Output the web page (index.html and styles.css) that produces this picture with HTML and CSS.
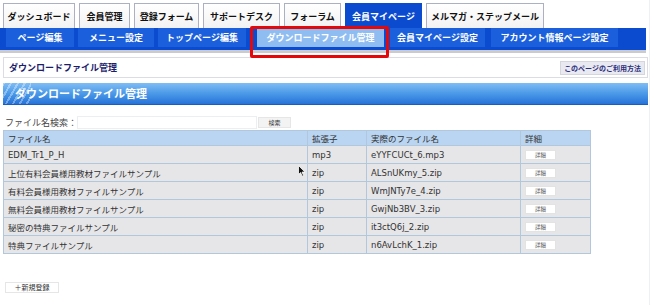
FILE: index.html
```html
<!DOCTYPE html>
<html lang="ja">
<head>
  <meta charset="UTF-8">
  <title>ダウンロードファイル管理</title>
  <link rel="stylesheet" href="styles.css">
</head>
<body>
  <div class="page">
    <!-- Main tabs -->
    <ul class="tabs">
      <li class="tab">ダッシュボード</li>
      <li class="tab">会員管理</li>
      <li class="tab">登録フォーム</li>
      <li class="tab">サポートデスク</li>
      <li class="tab">フォーラム</li>
      <li class="tab active">会員マイページ</li>
      <li class="tab">メルマガ・ステップメール</li>
    </ul>

    <!-- Sub navigation -->
    <div class="subnav">
      <a class="sub">ページ編集</a>
      <a class="sub">メニュー設定</a>
      <a class="sub">トップページ編集</a>
      <a class="sub current">ダウンロードファイル管理</a>
      <a class="sub">会員マイページ設定</a>
      <a class="sub">アカウント情報ページ設定</a>
    </div>
    <div class="highlight"></div>

    <div class="content">
      <div class="page-head">
        <h1>ダウンロードファイル管理</h1>
        <button class="help">このページのご利用方法</button>
      </div>

      <h2 class="section-title">ダウンロードファイル管理</h2>

      <form class="search">
        <label>ファイル名検索：</label>
        <input type="text">
        <button type="button">検索</button>
      </form>

      <table class="files">
        <thead>
          <tr>
            <th class="c-name">ファイル名</th>
            <th class="c-ext">拡張子</th>
            <th class="c-real">実際のファイル名</th>
            <th class="c-detail">詳細</th>
          </tr>
        </thead>
        <tbody>
          <tr>
            <td>EDM_Tr1_P_H</td><td>mp3</td><td>eYYFCUCt_6.mp3</td>
            <td><button class="detail">詳細</button></td>
          </tr>
          <tr>
            <td>上位有料会員様用教材ファイルサンプル</td><td>zip</td><td>ALSnUKmy_5.zip</td>
            <td><button class="detail">詳細</button></td>
          </tr>
          <tr>
            <td>有料会員様用教材ファイルサンプル</td><td>zip</td><td>WmJNTy7e_4.zip</td>
            <td><button class="detail">詳細</button></td>
          </tr>
          <tr>
            <td>無料会員様用教材ファイルサンプル</td><td>zip</td><td>GwjNb3BV_3.zip</td>
            <td><button class="detail">詳細</button></td>
          </tr>
          <tr>
            <td>秘密の特典ファイルサンプル</td><td>zip</td><td>it3ctQ6j_2.zip</td>
            <td><button class="detail">詳細</button></td>
          </tr>
          <tr>
            <td>特典ファイルサンプル</td><td>zip</td><td>n6AvLchK_1.zip</td>
            <td><button class="detail">詳細</button></td>
          </tr>
        </tbody>
      </table>

      <button class="new">＋新規登録</button>
    </div>

    <!-- mouse pointer -->
    <svg class="pointer" width="8" height="12" viewBox="0 0 8 12">
      <path d="M0.5 0.5 L0.5 9.5 L2.6 7.6 L4.2 11.2 L5.6 10.6 L4 7.1 L7 7.1 Z" fill="#111" stroke="#fff" stroke-width="0.8"/>
    </svg>
  </div>
</body>
</html>
```

FILE: styles.css
```css
/* General */
body {
  margin: 0;
  background: #fff;
  font-family: "DejaVu Sans", "Noto Sans CJK JP", sans-serif;
  color: #333;
}

.page {
  position: relative;
  width: 650px;
  height: 305px;
  border-right: 1px solid #eef0f4;
  box-sizing: border-box;
}

/* Main tabs */
.tabs {
  display: flex;
  gap: 4px;
  margin: 0;
  padding: 3px 0 0 3px;
  list-style: none;
}

.tab {
  height: 25px;
  box-sizing: border-box;
  border: 1px solid #a9b1c2;
  border-bottom: none;
  background: linear-gradient(#fff, #f2f2f4);
  font-family: "Noto Sans CJK JP", sans-serif;
  font-size: 9px;
  font-weight: 700;
  color: #111;
  display: flex;
  align-items: center;
  justify-content: center;
  white-space: nowrap;
}

.tab:nth-child(1) { width: 72px; }
.tab:nth-child(2) { width: 51px; }
.tab:nth-child(3) { width: 65px; }
.tab:nth-child(4) { width: 77px; }
.tab:nth-child(5) { width: 57px; }
.tab:nth-child(6) { width: 77px; }
.tab:nth-child(7) { width: 118px; }

.tab.active {
  background: #0b4bd0;
  border-color: #0b4bd0;
  color: #fff;
}

/* Sub navigation */
.subnav {
  width: 646px;
  height: 25px;
  box-sizing: border-box;
  background: #0b4bd0;
  border-bottom: 3px solid #c9cbd0;
  display: flex;
  gap: 4px;
  padding: 0 0 0 6px;
}

.sub {
  height: 19px;
  background: #1b5fdc;
  color: #fff;
  font-family: "Noto Sans CJK JP", sans-serif;
  font-size: 9px;
  font-weight: 700;
  display: flex;
  align-items: center;
  justify-content: center;
  white-space: nowrap;
}

.sub:nth-child(1) { width: 68px; }
.sub:nth-child(2) { width: 76px; }
.sub:nth-child(3) { width: 88px; }
.sub:nth-child(4) { width: 127px; margin: 0 2px 0 7px; }
.sub:nth-child(5) { width: 95px; }
.sub:nth-child(6) { width: 127px; margin-left: 2px; }

.sub.current {
  background: #8fbdf1;
}

/* red annotation box */
.highlight {
  position: absolute;
  left: 250px;
  top: 26px;
  width: 139px;
  height: 32px;
  box-sizing: border-box;
  border: 3px solid #e4080a;
  border-radius: 2px;
}

/* Content */
.content {
  padding: 4px 0 0 3px;
}

.page-head {
  width: 645px;
  height: 21px;
  box-sizing: border-box;
  border: 1px solid #dcdde2;
  display: flex;
  align-items: center;
  justify-content: space-between;
  padding: 0 2px 0 5px;
}

.page-head h1 {
  margin: 0;
  font-family: "Noto Sans CJK JP", sans-serif;
  font-size: 9px;
  font-weight: 700;
  color: #1d1d6b;
}

.help {
  height: 14px;
  padding: 0 3px;
  border: 1px solid #d4d5de;
  background: #e9e9f1;
  font-family: "Noto Sans CJK JP", sans-serif;
  font-size: 7px;
  font-weight: 700;
  color: #2b2f7c;
  line-height: 12px;
}

.section-title {
  width: 645px;
  height: 22px;
  box-sizing: border-box;
  margin: 5px 0 0;
  padding-left: 12px;
  border-bottom: 1px solid #1b5cc0;
  background:
    repeating-linear-gradient(120deg, rgba(255,255,255,0.35) 0 2px, transparent 2px 6px) no-repeat 0 0 / 28px 100%,
    linear-gradient(#80bdf4, #4f9de9 45%, #2673d8);
  font-family: "Noto Sans CJK JP", sans-serif;
  font-size: 11px;
  font-weight: 700;
  color: #fff;
  line-height: 21px;
}

/* Search */
.search {
  display: flex;
  align-items: center;
  margin: 11px 0 0 2px;
  height: 13px;
}

.search label {
  width: 72px;
  font-family: "Noto Sans CJK JP", sans-serif;
  font-size: 9px;
  color: #444;
}

.search input {
  width: 180px;
  height: 13px;
  box-sizing: border-box;
  border: 1px solid #eceef2;
  margin: 0;
  padding: 0;
}

.search button {
  width: 33px;
  height: 11px;
  margin-left: 1px;
  padding: 0;
  border: 1px solid #e6e6e6;
  background: #f3f3f3;
  font-family: "Noto Sans CJK JP", sans-serif;
  font-size: 6px;
  color: #333;
  line-height: 9px;
}

/* Table */
.files {
  width: 588px;
  margin-top: 1px;
  border-collapse: collapse;
  border: 1px solid #b1c7dc;
  font-size: 8.5px;
}

.files th,
.files td {
  border: 1px solid #b1c7dc;
  padding: 0 0 0 4px;
  text-align: left;
  font-weight: 400;
  white-space: nowrap;
}

.files th {
  height: 14px;
  background: #b9d5f2;
  color: #333;
}

.files td {
  height: 17px;
  background: #e6e6e8;
  color: #333;
}

.c-name { width: 299px; }
.c-ext { width: 54px; }
.c-real { width: 149px; }

.detail {
  display: block;
  width: 31px;
  height: 10px;
  padding: 0;
  border: 1px solid #e3e3e3;
  background: #fff;
  font-family: "Noto Sans CJK JP", sans-serif;
  font-size: 5.5px;
  color: #555;
  line-height: 8px;
}

.new {
  display: block;
  margin: 28px 0 0 2px;
  width: 54px;
  height: 11px;
  padding: 0;
  border: 1px solid #e6e6e6;
  background: #fff;
  font-family: "Noto Sans CJK JP", sans-serif;
  font-size: 7px;
  color: #333;
  line-height: 9px;
}

.pointer {
  position: absolute;
  left: 298px;
  top: 165px;
}
```
